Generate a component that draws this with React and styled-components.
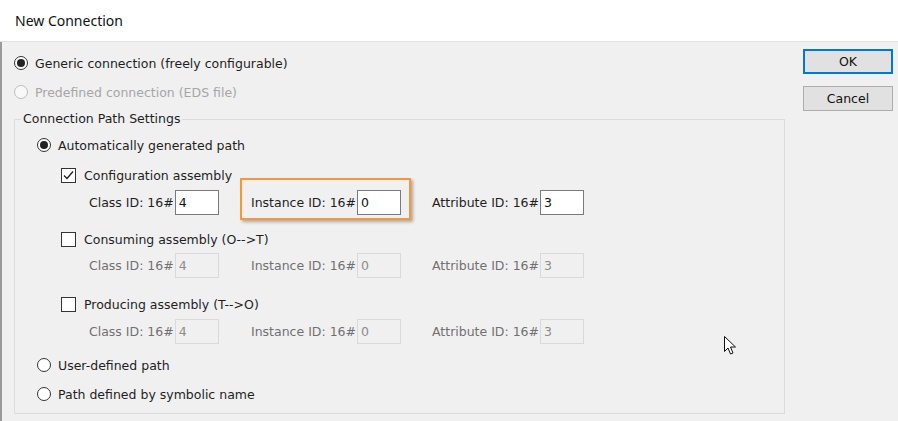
import React from "react"
import styled, { createGlobalStyle } from "styled-components"

const GlobalStyles = createGlobalStyle`
  html, body {
    margin: 0;
    padding: 0;
    background: #f0f0f0;
  }
  body {
    font-family: "DejaVu Sans", "Liberation Sans", sans-serif;
    font-size: 12.5px;
    color: #1e1e1e;
  }
`

const idRow = (disabled) => [
  { label: "Class ID: 16#", value: "4" },
  { label: "Instance ID: 16#", value: "0", highlight: !disabled },
  { label: "Attribute ID: 16#", value: "3" },
]

const Radio = ({ checked, disabled, children, mt }) => (
  <Row $mt={mt} $disabled={disabled}>
    <RadioCircle $disabled={disabled}>{checked && <RadioDot />}</RadioCircle>
    <span>{children}</span>
  </Row>
)

const Check = ({ checked, children, mt }) => (
  <Row $mt={mt} $indent={24} $gap={8}>
    <CheckBox>
      {checked && (
        <svg width="13" height="13" viewBox="0 0 13 13">
          <path d="M2 6.5 L5 9.5 L11 2.5" fill="none" stroke="#1e1e1e" strokeWidth="1.3" />
        </svg>
      )}
    </CheckBox>
    <span>{children}</span>
  </Row>
)

const IdFields = ({ disabled, mt }) => (
  <IdRow $mt={mt}>
    {idRow(disabled).map((f) => (
      <Field key={f.label} $disabled={disabled}>
        {f.highlight && <Highlight />}
        <span>{f.label}</span>
        <Input $disabled={disabled}>{f.value}</Input>
      </Field>
    ))}
  </IdRow>
)

const App = () => {
  return (
    <>
      <GlobalStyles />
      <Window>
        <TitleBar>New Connection</TitleBar>
        <Body>
          <Left>
            <Radio checked mt={11}>Generic connection (freely configurable)</Radio>
            <Radio disabled mt={9}>Predefined connection (EDS file)</Radio>
            <Group>
              <Legend>Connection Path Settings</Legend>
              <GroupContent>
                <Radio checked mt={0}>Automatically generated path</Radio>
                <Check checked mt={10}>Configuration assembly</Check>
                <IdFields mt={5} />
                <Check mt={14}>Consuming assembly (O--&gt;T)</Check>
                <IdFields disabled mt={4} />
                <Check mt={16}>Producing assembly (T--&gt;O)</Check>
                <IdFields disabled mt={5} />
                <Radio mt={11}>User-defined path</Radio>
                <Radio mt={9}>Path defined by symbolic name</Radio>
              </GroupContent>
            </Group>
          </Left>
          <Buttons>
            <Button $primary>OK</Button>
            <Button>Cancel</Button>
          </Buttons>
          <Cursor width="13" height="20" viewBox="0 0 13 20">
            <path
              d="M0.5 0.5 L0.5 15.5 L4 12 L6.5 18 L9 17 L6.5 11 L11.5 11 Z"
              fill="#fff"
              stroke="#111"
              strokeWidth="1"
              strokeLinejoin="miter"
            />
          </Cursor>
        </Body>
      </Window>
    </>
  )
}

const Window = styled.div`
  width: 898px;
  height: 421px;
  display: flex;
  flex-direction: column;
  overflow: hidden;
`

const TitleBar = styled.div`
  height: 41px;
  border-bottom: 1px solid #e3e3e3;
  background: #fff;
  display: flex;
  align-items: center;
  padding-left: 15px;
  font-family: "Noto Sans", "Open Sans", sans-serif;
  font-size: 14px;
  color: #111;
  box-sizing: content-box;
`

const Body = styled.div`
  position: relative;
  flex: 1;
  display: flex;
  border-left: 2px solid #9a9a9a;
  background: #f0f0f0;
`

const Left = styled.div`
  display: flex;
  flex-direction: column;
  padding-left: 12px;
  width: 771px;
`

const Row = styled.div`
  display: flex;
  align-items: center;
  height: 20px;
  margin-top: ${(p) => p.$mt || 0}px;
  margin-left: ${(p) => p.$indent || 0}px;
  gap: ${(p) => p.$gap || 7}px;
  color: ${(p) => (p.$disabled ? "#a6a6a6" : "#1e1e1e")};
  white-space: nowrap;
`

const RadioCircle = styled.span`
  width: 14px;
  height: 14px;
  box-sizing: border-box;
  border-radius: 50%;
  border: 1px solid ${(p) => (p.$disabled ? "#bcbcbc" : "#333")};
  background: ${(p) => (p.$disabled ? "#f8f8f8" : "#fff")};
  display: flex;
  align-items: center;
  justify-content: center;
  flex-shrink: 0;
`

const RadioDot = styled.span`
  width: 8px;
  height: 8px;
  border-radius: 50%;
  background: #222;
`

const CheckBox = styled.span`
  width: 15px;
  height: 15px;
  box-sizing: border-box;
  border: 1px solid #333;
  background: #fff;
  display: flex;
  align-items: center;
  justify-content: center;
  flex-shrink: 0;
`

const Group = styled.fieldset`
  margin: 9px 0 0 0;
  padding: 0;
  width: 771px;
  height: 303px;
  box-sizing: border-box;
  border: 1px solid #dcdcdc;
  min-width: 0;
`

const Legend = styled.legend`
  margin-left: 6px;
  padding: 0 2px;
  line-height: 16px;
  color: #1e1e1e;
`

const GroupContent = styled.div`
  display: flex;
  flex-direction: column;
  padding: 8px 0 0 22px;
`

const IdRow = styled.div`
  display: grid;
  grid-template-columns: 162px 181px auto;
  align-items: center;
  height: 25px;
  margin-top: ${(p) => p.$mt || 0}px;
  margin-left: 52px;
`

const Field = styled.div`
  position: relative;
  display: flex;
  align-items: center;
  white-space: nowrap;
  color: ${(p) => (p.$disabled ? "#707070" : "#1e1e1e")};
`

const Input = styled.span`
  width: 44px;
  height: 25px;
  box-sizing: border-box;
  margin-left: 1px;
  padding-left: 3px;
  display: flex;
  align-items: center;
  border: 1px solid ${(p) => (p.$disabled ? "#d9d9d9" : "#7a7a7a")};
  background: ${(p) => (p.$disabled ? "#f0f0f0" : "#fff")};
  color: ${(p) => (p.$disabled ? "#8c8c8c" : "#111")};
`

const Highlight = styled.span`
  position: absolute;
  left: -11px;
  top: -12px;
  width: 171px;
  height: 42px;
  box-sizing: border-box;
  border: 2px solid #f7963a;
  box-shadow: 2px 2px 3px rgba(0, 0, 0, 0.3);
  pointer-events: none;
`

const Buttons = styled.div`
  display: flex;
  flex-direction: column;
  gap: 12px;
  margin: 7px 0 0 18px;
`

const Button = styled.div`
  width: 90px;
  height: 25px;
  box-sizing: border-box;
  display: flex;
  align-items: center;
  justify-content: center;
  background: #e1e1e1;
  border: ${(p) => (p.$primary ? "2px solid #0078d7" : "1px solid #adadad")};
  color: #111;
`

const Cursor = styled.svg`
  position: absolute;
  left: 722px;
  top: 294px;
`

export default App
